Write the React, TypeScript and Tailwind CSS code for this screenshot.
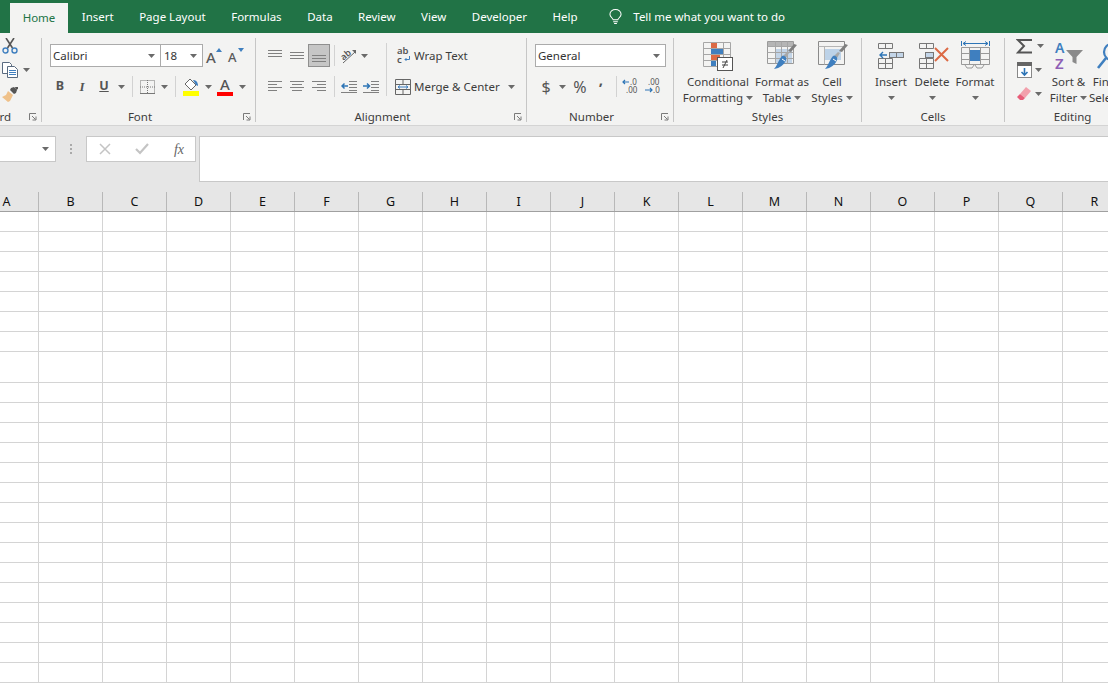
import React from 'react';

const FONT = { fontFamily: '"Noto Sans", "Open Sans", sans-serif' };
const COLS = ['A', 'B', 'C', 'D', 'E', 'F', 'G', 'H', 'I', 'J', 'K', 'L', 'M', 'N', 'O', 'P', 'Q', 'R'];
const TABS = ['Insert', 'Page Layout', 'Formulas', 'Data', 'Review', 'View', 'Developer', 'Help'];
// row heights, the eighth one is taller
const ROWS = [20, 20, 20, 20, 20, 20, 20, 31, 20, 20, 20, 20, 20, 20, 20, 20, 20, 20, 20, 20, 20, 20, 20];

const Arrow = () => (
  <svg width="7" height="4" viewBox="0 0 7 4" className="shrink-0">
    <path d="M0 0h7L3.5 4z" fill="#6a6a6a" />
  </svg>
);

const Launcher = () => (
  <svg width="8" height="8" viewBox="0 0 8 8" fill="none" stroke="#7a7a7a" strokeWidth="1">
    <path d="M.5 7V.5H7M3 3l3.5 3.5M7 3.5v3.5H3.5" />
  </svg>
);

// width-fixed slot for a small ribbon button
const Slot = ({ w = 22, children }: { w?: number; children: React.ReactNode }) => (
  <div className="flex items-center justify-center h-[23px] shrink-0" style={{ width: w }}>
    {children}
  </div>
);

const Sep = ({ ml }: { ml: number }) => <div className="w-px h-[21px] bg-[#d2d2d2] shrink-0" style={{ marginLeft: ml }} />;

const Lines = ({ d }: { d: string }) => (
  <svg width="16" height="16" viewBox="0 0 16 16" fill="none" stroke="#808080" strokeWidth="1">
    <path d={d} />
  </svg>
);

const Group = ({ w, label, launcher, children }: { w: number; label: string; launcher?: boolean; children: React.ReactNode }) => (
  <div className="mt-[5px] h-[84px] border-r border-[#c6c6c6] shrink-0 flex flex-col" style={{ width: w }}>
    <div className="h-[72px]">{children}</div>
    <div className="flex h-[12px] leading-[14px] text-[11.5px] text-[#3c3c3c]">
      <div className="flex-1 text-center whitespace-nowrap">{label}</div>
      {launcher && (
        <div className="w-[17px] pl-[5px] pt-[3px]">
          <Launcher />
        </div>
      )}
    </div>
  </div>
);

const BigButton = ({ w, icon, line1, line2, arrow = true, shift = 0 }: { w: number; icon: React.ReactNode; line1: string; line2?: string; arrow?: boolean; shift?: number }) => (
  <div className="flex flex-col items-center shrink-0 pt-[2px]" style={{ width: w }}>
    <div className="h-[32px] flex items-center justify-center" style={{ marginLeft: shift }}>{icon}</div>
    <div className="mt-[2px] text-[11.5px] leading-[16px] text-[#3c3c3c] text-center whitespace-nowrap">{line1}</div>
    <div className="h-[16px] flex items-center gap-[3px] text-[11.5px] leading-[16px] text-[#3c3c3c] whitespace-nowrap">
      {line2}
      {arrow && <Arrow />}
    </div>
  </div>
);

const Scissors = () => (
  <svg width="16" height="16" viewBox="0 0 16 16" fill="none">
    <path d="M4 0l6.5 10M12 0L5.5 10" stroke="#555" strokeWidth="1.6" />
    <circle cx="3.5" cy="12.5" r="2.5" stroke="#3f7fbf" strokeWidth="1.4" />
    <circle cx="12.5" cy="12.5" r="2.5" stroke="#3f7fbf" strokeWidth="1.4" />
  </svg>
);

const Copy = () => (
  <svg width="16" height="16" viewBox="0 0 16 16" fill="#fff" stroke="#5a6b80" strokeWidth="1">
    <path d="M.5.5h7l2 2v9h-9z" />
    <path d="M5.5 4.5h7l3 3v8h-10z" />
    <path d="M7 8.500h7M7 10.500h7M7 12.500h7" stroke="#3f7fbf" />
  </svg>
);

const Painter = () => (
  <svg width="16" height="15" viewBox="0 0 16 15">
    <path d="M9 1l3-1 3 3-1 3-2 1-4-4z" fill="#555" />
    <path d="M13 0l3-0 0 2-2 1z" fill="#555" />
    <path d="M6 4l5 4-3 6-2 1-6-5 2-1 2-1z" fill="#efc18a" />
  </svg>
);

const FontUpDown = ({ up }: { up?: boolean }) => (
  <div className="relative w-[16px] h-[18px] text-[#5a5a5a] font-medium" style={{ fontSize: up ? 15 : 13, lineHeight: '20px' }}>
    A
    <svg width="6" height="4" viewBox="0 0 6 4" className="absolute right-0 top-[1px]">
      <path d={up ? 'M0 4h6L3 0z' : 'M0 0h6L3 4z'} fill="#3f7fbf" />
    </svg>
  </div>
);

const Borders = () => (
  <svg width="15" height="14" viewBox="0 0 15 14" fill="none" stroke="#777" strokeWidth="1" strokeDasharray="1 1">
    <path d="M.5.5h14v13H.5zM7.5 0v14M0 7h15" />
    <path d="M0 13.500h15" strokeDasharray="none" />
  </svg>
);

const FillColor = () => (
  <svg width="16" height="18" viewBox="0 0 16 18">
    <path d="M7 1l6 6-5 5-6-6z" fill="#fff" stroke="#666" strokeWidth="1" />
    <path d="M10 2c3 0 5 2 5 6l-2-1z" fill="#3f7fbf" />
    <rect x="0" y="13" width="16" height="5" fill="#ffff00" />
  </svg>
);

const FontColor = () => (
  <div className="flex flex-col items-center w-[16px]">
    <span className="text-[15px] leading-[14px] font-medium text-[#555]">A</span>
    <div className="w-[16px] h-[4px] bg-[#ff0000] mt-[1px]" />
  </div>
);

const Orientation = () => (
  <svg width="18" height="16" viewBox="0 0 18 16" overflow="visible">
    <text x="1" y="10" transform="rotate(-40 6 8)" fontSize="9" fill="#555" fontWeight="600">ab</text>
    <path d="M3 15L15 4" stroke="#666" strokeWidth="1" />
    <path d="M12 2h4v4z" fill="#666" />
  </svg>
);

const WrapIcon = () => (
  <svg width="14" height="17" viewBox="0 0 14 17" overflow="visible">
    <text x="0" y="7" fontSize="9.5" fill="#555" fontWeight="600">ab</text>
    <text x="0" y="15.500" fontSize="9.5" fill="#555" fontWeight="600">c</text>
    <path d="M12.500 9v3.500H8M9.500 11L8 12.500 9.500 14" fill="none" stroke="#3f7fbf" strokeWidth="1" />
  </svg>
);

const MergeIcon = () => (
  <svg width="16" height="16" viewBox="0 0 16 16" fill="none" stroke="#666" strokeWidth="1">
    <path d="M.5.5h15v15H.5zM.5 5.500h15M.5 10.500h15M8 .5v5M8 10.500v5" />
    <path d="M3 8h10M5 6.500L3 8l2 1.500M11 6.500L13 8l-2 1.500" stroke="#3f7fbf" />
  </svg>
);

const Indent = ({ flip }: { flip?: boolean }) => (
  <svg width="16" height="12" viewBox="0 0 16 12" fill="none">
    <path d="M8 .5h8M8 3.500h8M8 6.500h8M8 9.500h8M0 11.500h16" stroke="#808080" strokeWidth="1" />
    <path d={flip ? 'M0 5h6M4 2.500L6.500 5 4 7.500' : 'M1 5h6M3.500 2.500L1 5l2.500 2.500'} stroke="#2e75b6" strokeWidth="1.5" />
  </svg>
);

const Decimal = () => (
  <svg width="18" height="17" viewBox="0 0 18 17" fontSize="8" fill="#555" overflow="visible">
    <text x="8" y="7">.0</text>
    <text x="4" y="15">.00</text>
    <path d="M1 4h6M3 2L1 4l2 2" fill="none" stroke="#2e75b6" strokeWidth="1.2" />
  </svg>
);

const DecimalLess = () => (
  <svg width="18" height="17" viewBox="0 0 18 17" fontSize="8" fill="#555" overflow="visible">
    <text x="4" y="7">.00</text>
    <text x="9" y="15">.0</text>
    <path d="M1 12h7M6 10l2 2-2 2" fill="none" stroke="#2e75b6" strokeWidth="1.2" />
  </svg>
);

const CondFormat = () => (
  <svg width="30" height="30" viewBox="0 0 30 30" fill="none">
    <path d="M.5 1.500h27v24H.5zM.5 7.500h27M.5 13.500h27M.5 19.500h27M8.500 1.500v24M20.500 1.500v24" stroke="#a6a6a6" />
    <rect x="8" y="2" width="6" height="5" fill="#dc6a45" />
    <rect x="8" y="8" width="12" height="5" fill="#3f7fbf" />
    <rect x="8" y="14" width="9" height="5" fill="#dc6a45" />
    <rect x="8" y="20" width="5" height="5" fill="#3f7fbf" />
    <rect x="14.500" y="16.500" width="15" height="13" fill="#fff" stroke="#555" />
    <path d="M19 21h6M19 24h6M24 19l-4 8" stroke="#444" />
  </svg>
);

const Brush = () => (
  <>
    <path d="M30 4L24 11l-3-1 6-7z" fill="#7f7f7f" />
    <path d="M22 12l-3 5-3-2 4-4z" fill="#a8a8a8" />
    <path d="M15 15c3-1 5 2 4 4-2 5-6 8-12 9 3-3 4-8 8-13z" fill="#3f7fbf" />
    <path d="M15 18l3 2" stroke="#fff" />
  </>
);

const TableFormat = () => (
  <svg width="31" height="30" viewBox="0 0 31 30" fill="none">
    <rect x="8" y="8" width="17" height="15" fill="#c3d5e8" />
    <path d="M.5.5h26v22H.5z" stroke="#9a9a9a" />
    <rect x="1" y="1" width="25" height="4" fill="#b5b5b5" />
    <path d="M.5 5.500h26M.5 11.500h26M.5 17.500h26M8.500.5v22M14.500.5v22M20.500.5v22" stroke="#a6a6a6" />
    <Brush />
  </svg>
);

const CellStyles = () => (
  <svg width="32" height="30" viewBox="0 0 32 30" fill="none">
    <path d="M.5.5h26v23H.5z" stroke="#8a8a8a" />
    <path d="M.5 5.500h26M6.500 5.500v18" stroke="#b5b5b5" />
    <rect x="7" y="8" width="16" height="11" fill="#bcd2e8" />
    <Brush />
  </svg>
);

const InsertIcon = () => (
  <svg width="27" height="27" viewBox="0 0 27 27" fill="none" stroke="#777">
    <path d="M.5.5h14v5H.5zM7.500.5v5" />
    <path d="M.5 15.500h14v10H.5zM.5 20.500h14M7.500 15.500v10" />
    <rect x="11.500" y="9.500" width="7" height="5" fill="#c3d5e8" />
    <rect x="18.500" y="9.500" width="7" height="5" fill="#c3d5e8" />
    <path d="M2 12h7M5 9l-3 3 3 3" stroke="#2e75b6" strokeWidth="1.4" />
  </svg>
);

const DeleteIcon = () => (
  <svg width="30" height="27" viewBox="0 0 30 27" fill="none" stroke="#777">
    <path d="M.5.5h14v5H.5zM7.500.5v5" />
    <path d="M.5 15.500h14v10H.5zM.5 20.500h14M7.500 15.500v10" />
    <rect x="6.500" y="9.500" width="8" height="5" fill="#c3d5e8" />
    <path d="M16 5l13 13M29 5L16 18" stroke="#dc6a45" strokeWidth="2" />
  </svg>
);

const FormatIcon = () => (
  <svg width="29" height="31" viewBox="0 0 29 31" fill="none" stroke="#999">
    <path d="M.5 0v5M28.500 0v5M2 2.500h25M5 .5L2 2.500l3 2M24 .5l3 2-3 2" stroke="#2e75b6" />
    <path d="M.5 6.500h28v17H.5zM.5 12.500h28M.5 18.500h28M8.500 6.500v17M19.500 6.500v17" />
    <rect x="9" y="9" width="10" height="11" fill="#3f7fbf" stroke="none" />
    <path d="M4 24l2 3h5l2-3M14 24l2 3h5l2-3" />
  </svg>
);

const Sigma = () => (
  <svg width="16" height="15" viewBox="0 0 16 15" fill="none">
    <path d="M15 2V1H2l6 6-6 6.500h13v-1" stroke="#555" strokeWidth="2" />
  </svg>
);

const FillDown = () => (
  <svg width="15" height="16" viewBox="0 0 15 16" fill="none">
    <rect x=".5" y=".5" width="14" height="15" fill="#fff" stroke="#888" />
    <rect x="0" y="0" width="15" height="4" fill="#666" />
    <path d="M7.500 6v7M4.500 10l3 3 3-3" stroke="#2e75b6" strokeWidth="1.6" />
  </svg>
);

const Eraser = () => (
  <svg width="14" height="14" viewBox="0 0 14 14">
    <path d="M9 0l5 4-6 7-5-4z" fill="#f2a0ac" />
    <path d="M3 7l5 4-2 2H3L0 10z" fill="#e85c78" />
  </svg>
);

const SortFilter = () => (
  <svg width="30" height="30" viewBox="0 0 30 30" fill="none" overflow="visible">
    <text x="1" y="12" fontSize="14" fontWeight="600" fill="#3f7fbf">A</text>
    <text x="1" y="28" fontSize="15" fontWeight="600" fill="#8e5fb5">Z</text>
    <path d="M12 9h17l-6.500 7v7l-4-2v-5z" fill="#8a8a8a" />
  </svg>
);

const FindIcon = () => (
  <svg width="30" height="30" viewBox="0 0 30 30" fill="none">
    <circle cx="17" cy="11" r="8" stroke="#3f7fbf" strokeWidth="2.2" />
    <path d="M11 17l-8 10" stroke="#3f7fbf" strokeWidth="2.6" />
  </svg>
);

const Bulb = () => (
  <svg width="13" height="16" viewBox="0 0 14 17" fill="none" stroke="#fff" strokeWidth="1.1">
    <path d="M4.500 11.500C4 9.500 1 8.500 1 5.500a6 5 0 0 1 12 0c0 3-3 4-3.500 6z" />
    <path d="M4.500 13.500h5M5.500 15.500h3" />
  </svg>
);

const Ribbon = () => (
  <div className="flex h-[93px] bg-[#f3f3f2] border-b border-[#d4d4d4] -ml-[54px]">
    {/* Clipboard, mostly cut off on the left */}
    <Group w={96} label="Clipboard" launcher>
      <div className="flex flex-col gap-[8px] pl-[56px]">
        <div className="h-4 flex items-center"><Scissors /></div>
        <div className="h-4 flex items-center gap-[5px]"><Copy /><Arrow /></div>
        <div className="h-4 flex items-center"><Painter /></div>
      </div>
    </Group>

    <Group w={214} label="Font" launcher>
      <div className="flex flex-col gap-[8px] pt-[6px]">
        <div className="flex items-center pl-[8px]">
          <div className="w-[111px] h-[23px] bg-white border border-[#ababab] flex items-center justify-between pl-[2px] pr-[5px] text-[11.5px] text-[#333]">
            Calibri
            <Arrow />
          </div>
          <div className="w-[43px] h-[23px] -ml-px bg-white border border-[#ababab] flex items-center justify-between pl-[3px] pr-[5px] text-[11.5px] text-[#333]">
            18
            <Arrow />
          </div>
          <Slot><FontUpDown up /></Slot>
          <Slot><FontUpDown /></Slot>
        </div>
        <div className="flex items-center pl-[7px]">
          <Slot><span className="text-[12.5px] font-bold text-[#555]">B</span></Slot>
          <Slot><span className="text-[13px] italic font-semibold text-[#555]" style={{ fontFamily: '"Liberation Serif", serif' }}>I</span></Slot>
          <Slot><span className="text-[12.5px] font-bold underline text-[#555]">U</span></Slot>
          <Slot w={12}><Arrow /></Slot>
          <Sep ml={5} />
          <div className="ml-[3px] flex">
            <Slot><Borders /></Slot>
            <Slot w={12}><Arrow /></Slot>
          </div>
          <Sep ml={5} />
          <div className="ml-[4px] flex">
            <Slot><FillColor /></Slot>
            <Slot w={12}><Arrow /></Slot>
            <Slot><FontColor /></Slot>
            <Slot w={12}><Arrow /></Slot>
          </div>
        </div>
      </div>
    </Group>

    <Group w={271} label="Alignment" launcher>
      <div className="flex pt-[6px]">
        <div className="flex flex-col gap-[8px] pl-[8px]">
          <div className="flex items-center">
            <Slot><Lines d="M1 2.500h14M1 5.500h14M1 8.500h14" /></Slot>
            <Slot><Lines d="M1 4.500h14M1 7.500h14M1 10.500h14" /></Slot>
            <div className="w-[22px] h-[23px] bg-[#c6c6c6] border border-[#8f8f8f] flex items-center justify-center">
              <Lines d="M1 7.500h14M1 10.500h14M1 13.500h14" />
            </div>
            <Sep ml={4} />
            <div className="ml-[3px] flex">
              <Slot><Orientation /></Slot>
              <Slot w={8}><Arrow /></Slot>
            </div>
          </div>
          <div className="flex items-center">
            <Slot><Lines d="M1 2.500h14M1 5.500h9M1 8.500h14M1 11.500h9" /></Slot>
            <Slot><Lines d="M1 2.500h14M3 5.500h10M1 8.500h14M3 11.500h10" /></Slot>
            <Slot><Lines d="M1 2.500h14M6 5.500h9M1 8.500h14M6 11.500h9" /></Slot>
            <Sep ml={4} />
            <div className="ml-[3px] flex">
              <Slot><Indent /></Slot>
              <Slot><Indent flip /></Slot>
            </div>
          </div>
        </div>
        <div className="w-px h-[53px] bg-[#d2d2d2] ml-[4px] -mt-[1px]" />
        <div className="flex flex-col gap-[8px] pl-[7px]">
          <div className="h-[23px] flex items-center gap-[3px] pl-[3px] text-[11.5px] text-[#3c3c3c] whitespace-nowrap">
            <WrapIcon />
            Wrap Text
          </div>
          <div className="h-[23px] flex items-center gap-[3px] pl-px text-[11.5px] text-[#3c3c3c] whitespace-nowrap">
            <MergeIcon />
            Merge &amp; Center
            <span className="ml-[5px]"><Arrow /></span>
          </div>
        </div>
      </div>
    </Group>

    <Group w={147} label="Number" launcher>
      <div className="flex flex-col gap-[8px] pt-[6px] pl-[8px]">
        <div className="w-[131px] h-[23px] bg-white border border-[#ababab] flex items-center justify-between pl-[2px] pr-[5px] text-[11.5px] text-[#333]">
          General
          <Arrow />
        </div>
        <div className="flex items-center text-[#555]">
          <Slot w={22}><span className="text-[16px]">$</span></Slot>
          <Slot w={10}><Arrow /></Slot>
          <Slot w={26}><span className="text-[16px]">%</span></Slot>
          <Slot w={16}><span className="text-[15px] font-bold -mt-[14px]">,</span></Slot>
          <Sep ml={7} />
          <div className="flex ml-[3px]">
            <Slot><Decimal /></Slot>
            <Slot><DecimalLess /></Slot>
          </div>
        </div>
      </div>
    </Group>

    <Group w={188} label="Styles">
      <div className="flex pl-[9px]">
        <BigButton w={70} icon={<CondFormat />} line1="Conditional" line2="Formatting" />
        <BigButton w={58} icon={<TableFormat />} line1="Format as" line2="Table" />
        <BigButton w={42} icon={<CellStyles />} line1="Cell" line2="Styles" shift={4} />
      </div>
    </Group>

    <Group w={143} label="Cells">
      <div className="flex pl-[9px]">
        <BigButton w={40} icon={<InsertIcon />} line1="Insert" />
        <BigButton w={42} icon={<DeleteIcon />} line1="Delete" shift={3} />
        <BigButton w={44} icon={<FormatIcon />} line1="Format" />
      </div>
    </Group>

    <Group w={136} label="Editing">
      <div className="flex">
        <div className="flex flex-col gap-[8px] pl-[11px] w-[47px] shrink-0">
          <div className="h-4 flex items-center gap-[5px]"><Sigma /><Arrow /></div>
          <div className="h-4 flex items-center gap-[3px] pl-px"><FillDown /><Arrow /></div>
          <div className="h-4 flex items-center gap-[4px] pl-px"><Eraser /><Arrow /></div>
        </div>
        <BigButton w={33} icon={<SortFilter />} line1="Sort &" line2="Filter" />
        <BigButton w={50} icon={<FindIcon />} line1="Find &" line2="Select" />
      </div>
    </Group>
  </div>
);

const FormulaBar = () => (
  <div className="flex h-[66px] pt-[10px] bg-[#e6e6e6]">
    <div className="w-[56px] h-[26px] bg-white border border-l-0 border-[#c8c8c8] flex items-center justify-end pr-[6px]">
      <Arrow />
    </div>
    <div className="w-[30px] h-[26px] flex flex-col items-center justify-center gap-[2px]">
      <div className="w-[2px] h-[2px] bg-[#aaa]" />
      <div className="w-[2px] h-[2px] bg-[#aaa]" />
      <div className="w-[2px] h-[2px] bg-[#aaa]" />
    </div>
    <div className="w-[110px] h-[26px] bg-white border border-[#c8c8c8] flex items-center justify-between pl-[12px] pr-[11px]">
      <svg width="12" height="12" viewBox="0 0 12 12" fill="none" stroke="#c4c4c4" strokeWidth="1.5">
        <path d="M1 1l10 10M11 1L1 11" />
      </svg>
      <svg width="14" height="12" viewBox="0 0 14 12" fill="none" stroke="#c4c4c4" strokeWidth="2.2">
        <path d="M1 6l4 4 8-9" />
      </svg>
      <span className="text-[14px] italic font-medium text-[#666]" style={{ fontFamily: '"Liberation Serif", serif' }}>fx</span>
    </div>
    <div className="ml-[3px] flex-1 h-[46px] bg-white border border-r-0 border-[#c8c8c8]" />
  </div>
);

export default function App() {
  return (
    <div className="w-[1108px] h-[683px] overflow-hidden bg-white" style={FONT}>
      {/* tab strip */}
      <div className="flex h-[33px] pl-[10px] bg-[#217346] text-white text-[11.5px] whitespace-nowrap">
        <div className="mt-[3px] mr-px h-[30px] w-[58px] bg-[#f3f3f2] text-[#217346] flex items-center justify-center">Home</div>
        {TABS.map((t) => (
          <div key={t} className="h-full flex items-center px-[12.75px]">{t}</div>
        ))}
        <div className="h-full flex items-center ml-[19px] gap-[11px]">
          <Bulb />
          Tell me what you want to do
        </div>
      </div>

      <Ribbon />
      <FormulaBar />

      {/* column headers */}
      <div className="flex h-[20px] -ml-[25px] bg-[#e6e6e6] border-b border-[#a0a0a0]">
        {COLS.map((c) => (
          <div key={c} className="w-[64px] shrink-0 border-r border-[#b8b8b8] flex items-center justify-center pt-[2px] text-[12.5px] text-[#111]">{c}</div>
        ))}
      </div>

      {/* sheet */}
      <div className="-ml-[25px]">
        {ROWS.map((h, i) => (
          <div key={i} className="flex" style={{ height: h }}>
            {COLS.map((c) => (
              <div key={c} className="w-[64px] shrink-0 border-r border-b border-[#d4d4d4]" />
            ))}
          </div>
        ))}
      </div>
    </div>
  );
}
